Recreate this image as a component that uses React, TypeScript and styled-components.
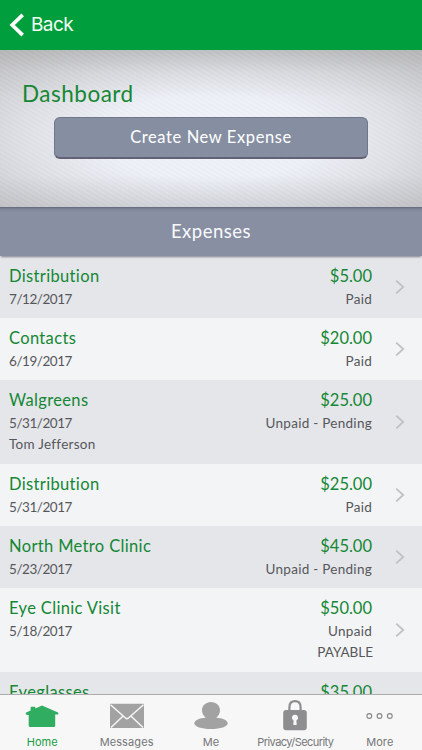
import React from "react";
import styled, { createGlobalStyle } from "styled-components";

const GlobalStyle = createGlobalStyle`
  * { box-sizing: border-box; }
  body { margin: 0; background: #f3f4f6; }
`;

const Screen = styled.div`
  display: flex;
  flex-direction: column;
  width: 422px;
  height: 750px;
  overflow: hidden;
  font-family: Lato, "Open Sans", sans-serif;
`;

const TopBar = styled.header`
  flex: none;
  height: 50px;
  padding-left: 9px;
  display: flex;
  align-items: center;
  background: #009e3c;
`;

const BackButton = styled.button`
  display: flex;
  align-items: center;
  gap: 7px;
  border: 0;
  padding: 0;
  background: none;
  color: #f4fff4;
  font: 400 19px/26px Inter, sans-serif;
  letter-spacing: -0.6px;
`;

const Hero = styled.section`
  flex: none;
  height: 157px;
  padding: 28px 54px 0;
  background:
    repeating-linear-gradient(30deg, rgba(255, 255, 255, 0.07) 0, rgba(90, 90, 90, 0.025) 2px, rgba(255, 255, 255, 0.07) 4px),
    linear-gradient(rgba(165, 165, 165, 0.5) 0, rgba(180, 180, 180, 0.2) 22px, transparent 48px, transparent 125px, rgba(170, 170, 175, 0.3) 157px),
    radial-gradient(ellipse 310px 125px at 50% 56%, #f0f3fb 0%, #edf0f7 35%, #dddfe4 62%, #cbccd0 85%, #b9babd 112%);
`;

const HeroTitle = styled.h1`
  margin: 0 0 7px -32px;
  font-size: 22.5px;
  font-weight: 400;
  line-height: 32px;
  letter-spacing: 0.5px;
  color: #168733;
`;

const CreateButton = styled.button`
  display: block;
  width: 314px;
  height: 42px;
  padding: 0;
  border: 1px solid #6f778b;
  border-bottom: 2px solid #626175;
  border-radius: 6px;
  background: #868fa2;
  color: #fff;
  font: 400 16.5px/39px Lato, sans-serif;
  letter-spacing: 0.6px;
`;

const SectionHeader = styled.h2`
  flex: none;
  position: relative;
  height: 49px;
  margin: 0;
  text-align: center;
  font-size: 18.5px;
  font-weight: 400;
  line-height: 49px;
  letter-spacing: 0.5px;
  color: #f8f9fc;
  background: linear-gradient(#626779 0, #7f859a 2px, #888fa2 5px, #888fa2 100%);
  box-shadow: 0 2px 2px -1px rgba(60, 60, 80, 0.6);
`;

const List = styled.main`
  flex: 1;
  min-height: 0;
  overflow: hidden;
`;

const Row = styled.article<{ $tall?: boolean }>`
  display: flex;
  height: ${(p) => (p.$tall ? 84 : 62)}px;
  padding: 9px 17px 0 9px;
  background: #f3f4f6;
  &:nth-child(odd) { background: #e5e6ea; }
`;

const Column = styled.div<{ $end?: boolean }>`
  flex: ${(p) => (p.$end ? "none" : "1")};
  text-align: ${(p) => (p.$end ? "right" : "left")};
`;

const Name = styled.div<{ $spacing?: number }>`
  height: 23px;
  font-size: 16.5px;
  line-height: 22px;
  letter-spacing: ${(p) => p.$spacing ?? 0.35}px;
  color: #148734;
`;

const Detail = styled.div<{ $spacing?: number }>`
  height: 21px;
  font-size: 13.5px;
  line-height: 22px;
  letter-spacing: ${(p) => p.$spacing ?? 0.28}px;
  color: #56575a;
`;

const Note = styled(Detail)`
  margin-right: -1px;
`;

const Chevron = styled.svg<{ $tall?: boolean }>`
  flex: none;
  width: 10px;
  height: 16px;
  margin: ${(p) => (p.$tall ? 25 : 14)}px 0 0 23px;
  fill: none;
  stroke: #c0c1c4;
  stroke-width: 1.8;
`;

const TabBar = styled.nav`
  flex: none;
  display: grid;
  grid-template-columns: repeat(5, 1fr);
  height: 56px;
  border-top: 1px solid #acacae;
  background: #f7f7f7;
`;

const Tab = styled.div<{ $active?: boolean; $spacing?: number }>`
  display: flex;
  flex-direction: column;
  align-items: center;
  color: ${(p) => (p.$active ? "#199b43" : "#757679")};
  font: 400 11px/14px Inter, sans-serif;
  letter-spacing: ${(p) => p.$spacing ?? 0}px;
  white-space: nowrap;
`;

const TabIcon = styled.svg`
  width: 40px;
  height: 36px;
  margin: 3px 0 1px;
  fill: #a2a2a2;
`;

interface Expense {
  name: string;
  date: string;
  amount: string;
  status: string;
  person?: string;
  note?: string;
}

const expenses: Expense[] = [
  { name: "Distribution", date: "7/12/2017", amount: "$5.00", status: "Paid" },
  { name: "Contacts", date: "6/19/2017", amount: "$20.00", status: "Paid" },
  { name: "Walgreens", date: "5/31/2017", amount: "$25.00", status: "Unpaid - Pending", person: "Tom Jefferson" },
  { name: "Distribution", date: "5/31/2017", amount: "$25.00", status: "Paid" },
  { name: "North Metro Clinic", date: "5/23/2017", amount: "$45.00", status: "Unpaid - Pending" },
  { name: "Eye Clinic Visit", date: "5/18/2017", amount: "$50.00", status: "Unpaid", note: "PAYABLE" },
  { name: "Eyeglasses", date: "", amount: "$35.00", status: "" },
];

function ExpenseRow({ item }: { item: Expense }) {
  const tall = Boolean(item.person || item.note);
  return (
    <Row $tall={tall}>
      <Column>
        <Name>{item.name}</Name>
        <Detail $spacing={-0.45}>{item.date}</Detail>
        {item.person && <Detail>{item.person}</Detail>}
      </Column>
      <Column $end>
        <Name $spacing={0}>{item.amount}</Name>
        <Detail>{item.status}</Detail>
        {item.note && <Note $spacing={0}>{item.note}</Note>}
      </Column>
      <Chevron $tall={tall} viewBox="0 0 10 16"><path d="M1.2 1.7 8.2 8 1.2 14.3" /></Chevron>
    </Row>
  );
}

export default function App() {
  return (
    <Screen>
      <GlobalStyle />
      <TopBar>
        <BackButton>
          <svg width="15" height="24" viewBox="0 0 15 24">
            <path d="M13.7 1.8 3.2 12l10.5 10.2" fill="none" stroke="#fff" strokeWidth="3.7" />
          </svg>
          Back
        </BackButton>
      </TopBar>
      <Hero>
        <HeroTitle>Dashboard</HeroTitle>
        <CreateButton>Create New Expense</CreateButton>
      </Hero>
      <SectionHeader>Expenses</SectionHeader>
      <List>
        {expenses.map((item, i) => <ExpenseRow key={i} item={item} />)}
      </List>
      <TabBar>
        <Tab $active>
          <TabIcon viewBox="0 0 40 36">
            <path fill="#30ad60" d="M4.2 14.6 8.6 12.4V9.5q0-.7.7-.7h3.4q.6 0 .7.8V10.4L20 7.4 36 14.4q1 1.2 0 2.2h-2.8v11.2q0 1.1-1 1.1H7.8q-1.1 0-1.1-1.1V17H5Q2.8 16 4.2 14.6Z" />
          </TabIcon>
          Home
        </Tab>
        <Tab $spacing={0.1}>
          <TabIcon viewBox="0 0 40 36">
            <rect x="3" y="5.8" width="34" height="24.2" rx=".6" />
            <path fill="none" stroke="#f7f7f7" strokeWidth="1.5" d="M3.5 6.8 18.5 20q1.5 1.3 3 0L36.5 6.8M4 29.5l12.4-11.7M36 29.5l-12.4-11.7" />
          </TabIcon>
          Messages
        </Tab>
        <Tab>
          <TabIcon viewBox="0 0 40 36">
            <path d="M20 4c5.2 0 9 3.6 9 8.3 0 3.2-1.5 5.6-3.8 7.4 6 .4 11.5 2.5 11.5 5.5 0 3.4-7 5.8-16.7 5.8S3.3 28.6 3.3 25.2c0-3 5.5-5.1 11.5-5.5-2.3-1.8-3.8-4.2-3.8-7.4C11 7.6 14.8 4 20 4Z" />
          </TabIcon>
          Me
        </Tab>
        <Tab $spacing={-0.56}>
          <TabIcon viewBox="0 0 40 36">
            <path fill="none" stroke="#8e8e90" strokeWidth="2.2" d="M14.4 14V9.3c0-3.7 2-6.2 5.6-6.2s5.6 2.5 5.6 6.2V14" />
            <rect x="8.2" y="12" width="23.6" height="20.2" rx="3" fill="#8e8e90" />
            <path fill="#f7f7f7" d="M20 16.8a3 3 0 0 1 1.4 5.7l.3 4.6h-3.4l.3-4.6a3 3 0 0 1 1.4-5.7Z" />
          </TabIcon>
          Privacy/Security
        </Tab>
        <Tab $spacing={0.1}>
          <TabIcon viewBox="0 0 40 36">
            <g fill="none" stroke="#858587" strokeWidth="1.1">
              <circle cx="9.3" cy="18" r="2.4" />
              <circle cx="19.5" cy="18" r="2.4" />
              <circle cx="29.8" cy="18" r="2.4" />
            </g>
          </TabIcon>
          More
        </Tab>
      </TabBar>
    </Screen>
  );
}
